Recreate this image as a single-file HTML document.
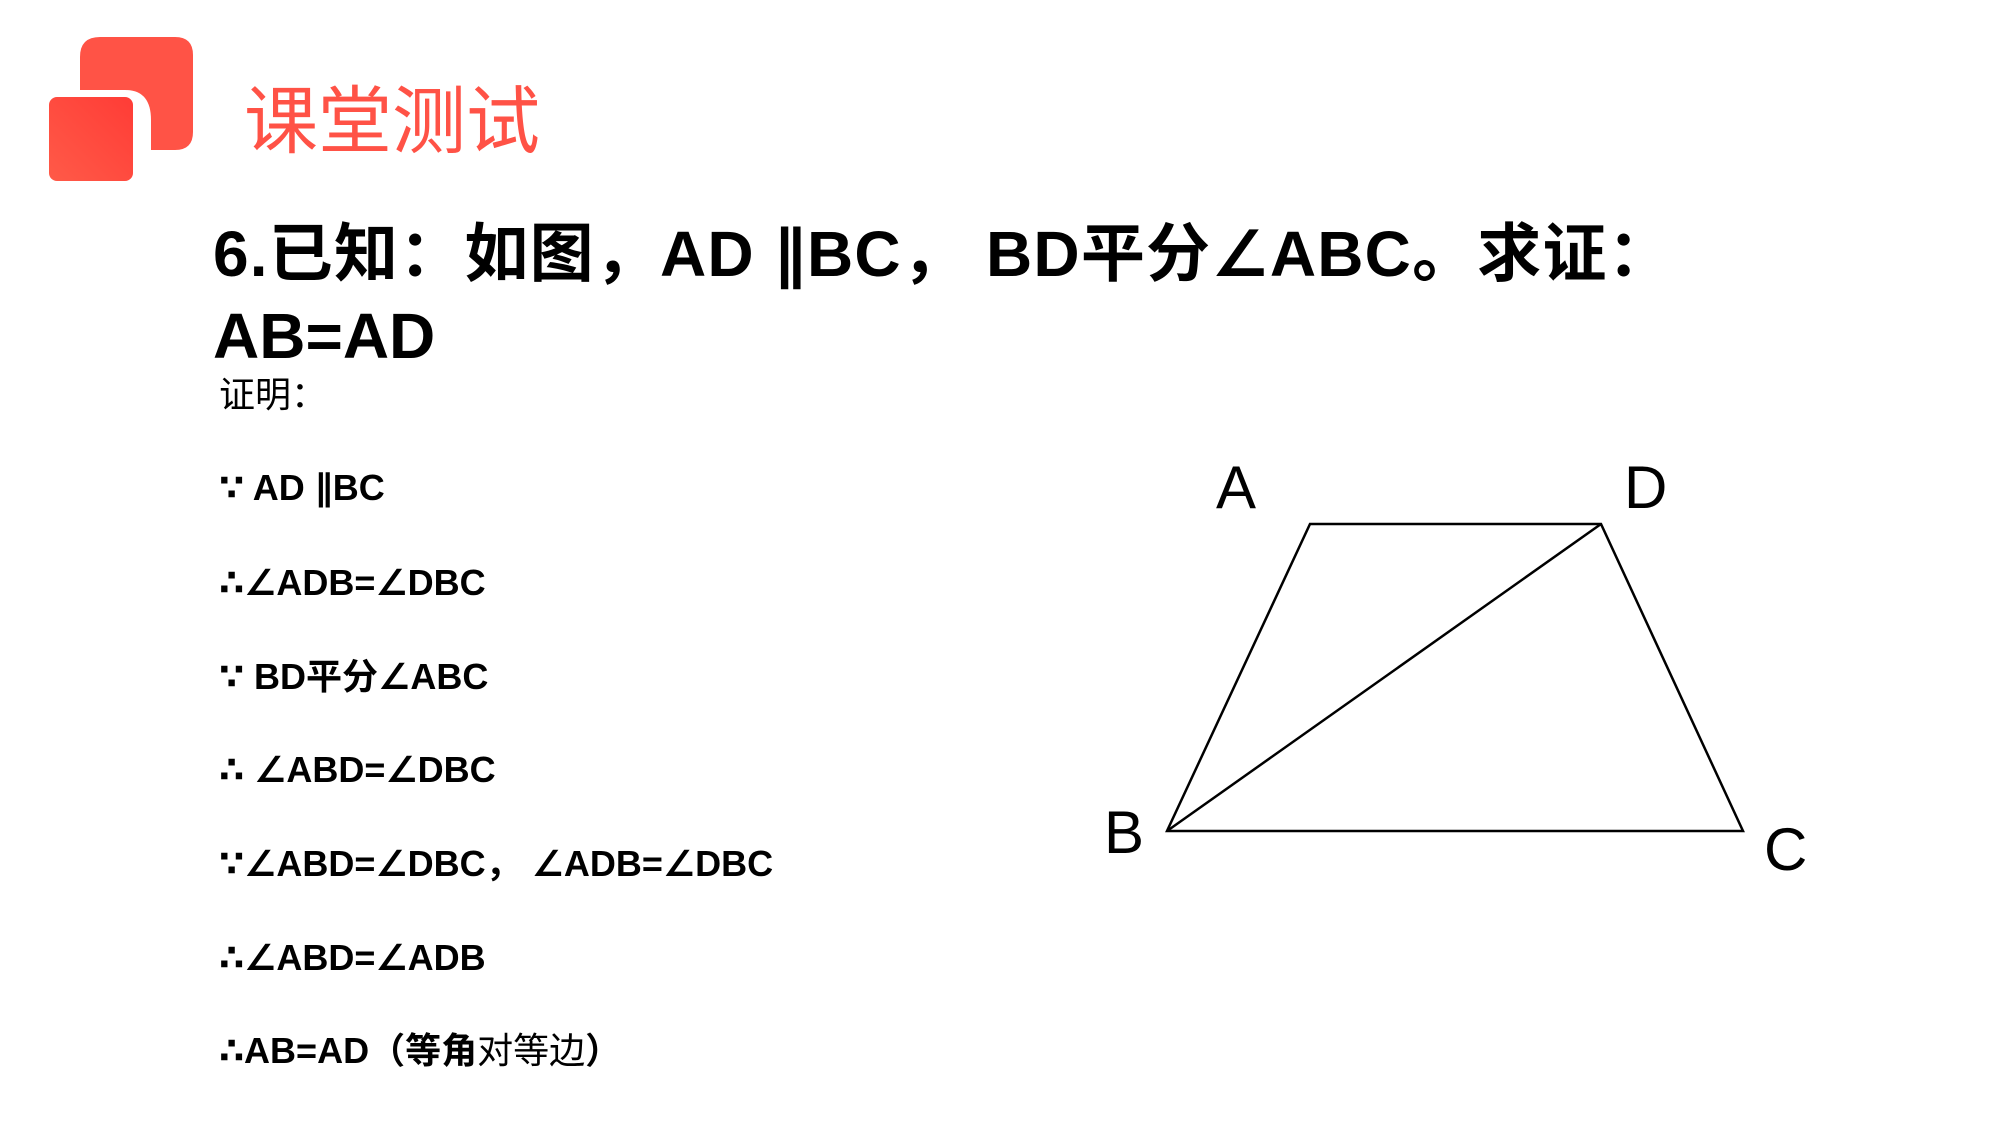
<!DOCTYPE html>
<html><head><meta charset="utf-8"><style>
html,body{margin:0;padding:0;background:#fff;}
body{width:2000px;height:1125px;position:relative;overflow:hidden;font-family:"Liberation Sans","DejaVu Sans","Noto Sans CJK SC",sans-serif;}
.t{position:absolute;white-space:nowrap;color:#000;}
.q{font-size:64px;font-weight:bold;left:213px;line-height:80px;}
.p{font-size:36px;font-weight:bold;left:219px;line-height:50px;}
.l{font-size:60px;position:absolute;line-height:60px;color:#000;}
</style></head><body>
<svg width="2000" height="1125" style="position:absolute;left:0;top:0">
<defs><linearGradient id="g" x1="1" y1="0" x2="0" y2="1"><stop offset="0" stop-color="#ff3c36"/><stop offset="1" stop-color="#ff5a48"/></linearGradient></defs>
<path d="M100 37 H175 Q193 37 193 55 V132 Q193 150 175 150 H151 V120 Q151 90 125 90 H80 V57 Q80 37 100 37 Z" fill="#ff5346"/>
<rect x="49" y="97" width="84" height="84" rx="8" fill="url(#g)"/>
<polygon points="1310,524 1601,524 1743,831 1167,831" fill="none" stroke="#000" stroke-width="2.5"/>
<line x1="1167" y1="831" x2="1601" y2="524" stroke="#000" stroke-width="2.5"/>
</svg>
<div class="t" style="left:244px;top:77px;font-size:74px;line-height:90px;color:#ff5246;">课堂测试</div>
<div class="t q" style="top:214px;letter-spacing:1.2px;">6.已知：如图，AD ∥BC， BD平分∠ABC。求证：</div>
<div class="t q" style="top:296px;">AB=AD</div>
<div class="t p" style="top:370px;font-weight:normal;">证明：</div>
<div class="t p" style="top:463px;">∵ AD ∥BC</div>
<div class="t p" style="top:558px;">∴∠ADB=∠DBC</div>
<div class="t p" style="top:652px;">∵ BD平分∠ABC</div>
<div class="t p" style="top:745px;">∴ ∠ABD=∠DBC</div>
<div class="t p" style="top:839px;">∵∠ABD=∠DBC， ∠ADB=∠DBC</div>
<div class="t p" style="top:933px;">∴∠ABD=∠ADB</div>
<div class="t p" style="top:1026px;">∴AB=AD（等角<span style="font-weight:normal">对等边</span>）</div>
<div class="l" style="left:1216px;top:458px;">A</div>
<div class="l" style="left:1624px;top:458px;">D</div>
<div class="l" style="left:1104px;top:803px;">B</div>
<div class="l" style="left:1764px;top:820px;">C</div>
</body></html>
